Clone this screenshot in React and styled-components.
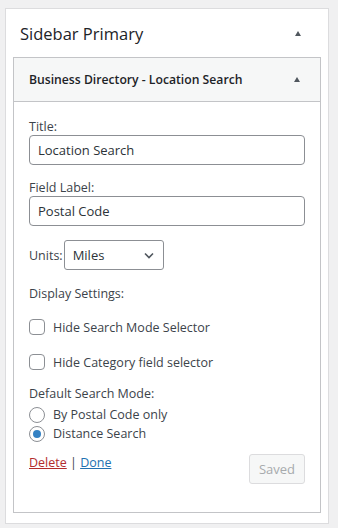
import React from "react";
import styled, { createGlobalStyle } from "styled-components";

const GlobalStyle = createGlobalStyle`
  body {
    margin: 0;
    background: #f0f0f1;
    font-family: "Open Sans", "Liberation Sans", sans-serif;
    color: #3c434a;
  }
`;

const Page = styled.div`
  padding: 8px 9px 0 5px;
`;

const Sidebar = styled.div`
  width: 324px;
  background: #fff;
  border: 1px solid #dcdcde;
  padding: 0 7px 10px;
  box-sizing: border-box;
`;

const SidebarHeader = styled.div`
  display: flex;
  align-items: center;
  justify-content: space-between;
  height: 48px;
  padding: 0 20px 0 7px;
`;

const SidebarTitle = styled.h2`
  margin: 0;
  font-size: 16.5px;
  font-weight: 400;
  color: #1d2327;
`;

const Toggle = styled.span`
  width: 0;
  height: 0;
  border-left: 3px solid transparent;
  border-right: 3px solid transparent;
  border-bottom: 5px solid #50575e;
`;

const Widget = styled.div`
  border: 1px solid #c3c4c7;
  background: #fff;
`;

const WidgetHeader = styled.div`
  display: flex;
  align-items: center;
  justify-content: space-between;
  height: 43px;
  padding: 0 20px 0 15px;
  background: #f6f7f7;
  border-bottom: 1px solid #c3c4c7;
`;

const WidgetTitle = styled.h3`
  margin: 0;
  font-size: 12.2px;
  font-weight: 600;
  color: #1d2327;
`;

const WidgetBody = styled.div`
  padding: 17px 15px 28px;
  font-size: 12.5px;
`;

const Field = styled.div`
  margin-top: ${(p) => p.gap || 0}px;
`;

const Label = styled.label`
  display: block;
  line-height: 16px;
`;

const TextInput = styled.input`
  display: block;
  width: 100%;
  height: 30px;
  box-sizing: border-box;
  border: 1px solid #8c8f94;
  border-radius: 4px;
  padding: 0 8px;
  font-family: inherit;
  font-size: 13px;
  color: #2c3338;
  outline: none;
`;

const InlineRow = styled.div`
  display: flex;
  align-items: center;
  margin-top: ${(p) => p.gap || 0}px;
`;

const SelectBox = styled.div`
  position: relative;
  width: 100px;
  height: 30px;
  margin-left: 1px;
  box-sizing: border-box;
  border: 1px solid #8c8f94;
  border-radius: 3px;
  display: flex;
  align-items: center;
  padding-left: 8px;
  font-size: 13px;
  color: #2c3338;

  svg {
    position: absolute;
    right: 9px;
    top: 11px;
  }
`;

const Heading = styled.div`
  line-height: 16px;
  margin-top: ${(p) => p.gap || 0}px;
`;

const CheckRow = styled.label`
  display: flex;
  align-items: center;
  gap: 8px;
  height: 16px;
  margin-top: ${(p) => p.gap || 0}px;
`;

const Check = styled.span`
  width: 16px;
  height: 16px;
  box-sizing: border-box;
  border: 1px solid #8c8f94;
  border-radius: 4px;
  flex-shrink: 0;
`;

const RadioRow = styled.label`
  display: flex;
  align-items: center;
  gap: 8px;
  height: 19px;
`;

const Radio = styled.span`
  width: 16px;
  height: 16px;
  box-sizing: border-box;
  border: 1px solid #8c8f94;
  border-radius: 50%;
  flex-shrink: 0;
  display: flex;
  align-items: center;
  justify-content: center;

  &::after {
    content: "";
    width: 8px;
    height: 8px;
    border-radius: 50%;
    background: ${(p) => (p.checked ? "#3582c4" : "transparent")};
  }
`;

const RadioGroup = styled.div`
  margin-top: 3px;
`;

const Footer = styled.div`
  display: flex;
  justify-content: space-between;
  align-items: flex-start;
  margin-top: 11px;
`;

const Links = styled.div`
  line-height: 18px;
  color: #3c434a;
`;

const Link = styled.a`
  color: ${(p) => (p.danger ? "#b32d2e" : "#2271b1")};
  text-decoration: underline;
`;

const SavedButton = styled.button`
  height: 30px;
  width: 56px;
  padding: 0;
  border: 1px solid #dcdcde;
  border-radius: 3px;
  background: #f6f7f7;
  color: #a7aaad;
  font-family: inherit;
  font-size: 13px;
`;

const Chevron = () => (
  <svg width="10" height="7" viewBox="0 0 10 7">
    <path d="M1 1.5 L5 5.5 L9 1.5" fill="none" stroke="#50575e" strokeWidth="1.6" />
  </svg>
);

const App = () => {
  return (
    <>
      <GlobalStyle />
      <Page>
        <Sidebar>
          <SidebarHeader>
            <SidebarTitle>Sidebar Primary</SidebarTitle>
            <Toggle />
          </SidebarHeader>
          <Widget>
            <WidgetHeader>
              <WidgetTitle>Business Directory - Location Search</WidgetTitle>
              <Toggle />
            </WidgetHeader>
            <WidgetBody>
              <Field>
                <Label>Title:</Label>
                <TextInput defaultValue="Location Search" />
              </Field>
              <Field gap={15}>
                <Label>Field Label:</Label>
                <TextInput defaultValue="Postal Code" />
              </Field>
              <InlineRow gap={14}>
                Units:
                <SelectBox>
                  Miles
                  <Chevron />
                </SelectBox>
              </InlineRow>
              <Heading gap={16}>Display Settings:</Heading>
              <CheckRow gap={17}>
                <Check />
                Hide Search Mode Selector
              </CheckRow>
              <CheckRow gap={19}>
                <Check />
                Hide Category field selector
              </CheckRow>
              <Heading gap={16}>Default Search Mode:</Heading>
              <RadioGroup>
                <RadioRow>
                  <Radio />
                  By Postal Code only
                </RadioRow>
                <RadioRow>
                  <Radio checked />
                  Distance Search
                </RadioRow>
              </RadioGroup>
              <Footer>
                <Links>
                  <Link danger href="#">Delete</Link> | <Link href="#">Done</Link>
                </Links>
                <SavedButton disabled>Saved</SavedButton>
              </Footer>
            </WidgetBody>
          </Widget>
        </Sidebar>
      </Page>
    </>
  );
};

export default App;
